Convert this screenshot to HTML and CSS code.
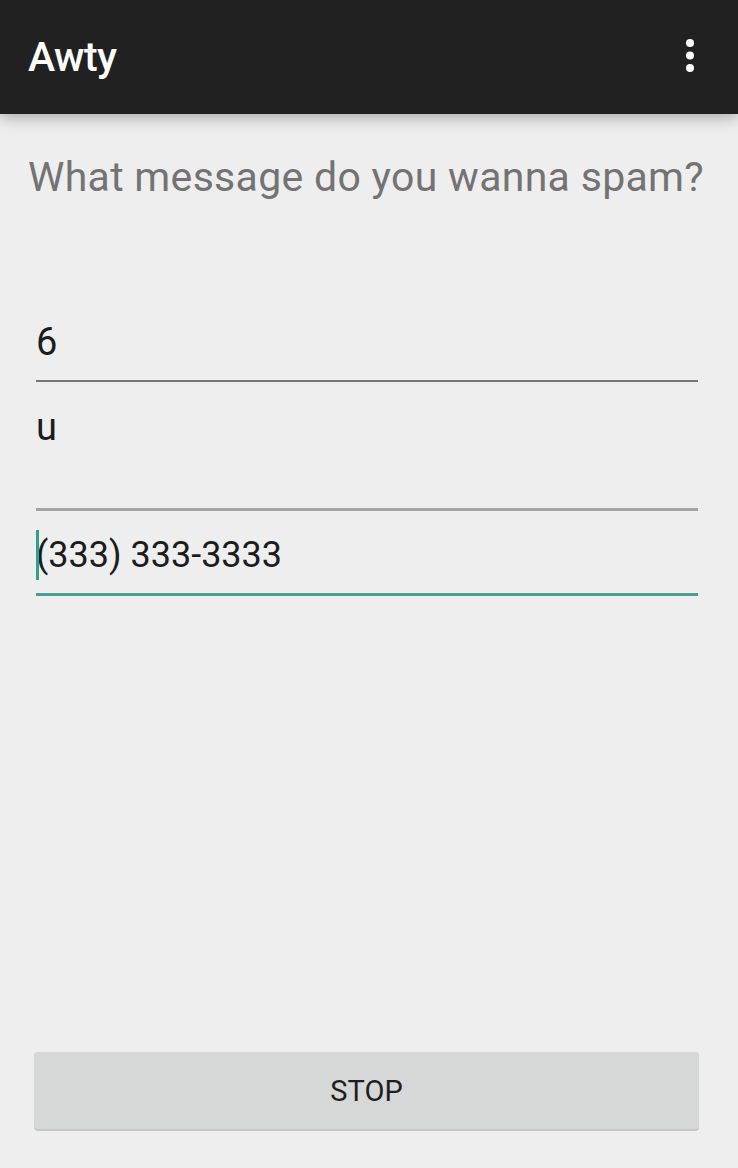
FILE: index.html
```html
<!DOCTYPE html>
<html>
<head>
<meta charset="utf-8">
<link rel="stylesheet" href="styles.css">
</head>
<body>
<div class="screen">
  <header class="appbar">
    <span class="title">Awty</span>
    <svg class="overflow" width="14" height="40" viewBox="0 0 14 40">
      <circle cx="7" cy="6" r="4" fill="#fff"/>
      <circle cx="7" cy="18.5" r="4" fill="#fff"/>
      <circle cx="7" cy="31" r="4" fill="#fff"/>
    </svg>
  </header>
  <main class="content">
    <p class="question">What message do you wanna spam?</p>
    <div class="field field-first">
      <div class="value">6</div>
    </div>
    <div class="field field-multi">
      <div class="value">u</div>
      <div class="value">&nbsp;</div>
    </div>
    <div class="field field-focused">
      <div class="value value-phone"><span class="cursor"></span>(333) 333-3333</div>
    </div>
    <div class="spacer"></div>
    <button class="btn">STOP</button>
  </main>
</div>
</body>
</html>
```

FILE: styles.css
```css
html, body {
  margin: 0;
  padding: 0;
  background: #eeeeee;
  font-family: Roboto, "Noto Sans", sans-serif;
}
.screen {
  width: 738px;
  height: 1168px;
  display: flex;
  flex-direction: column;
  overflow: hidden;
}
.appbar {
  position: relative;
  z-index: 1;
  height: 114px;
  flex: 0 0 114px;
  background: #212121;
  display: flex;
  align-items: center;
  justify-content: space-between;
  padding: 0 41px 0 28px;
  box-sizing: border-box;
  box-shadow: 0 4px 14px rgba(0,0,0,0.28);
}
.title {
  color: #ffffff;
  font-size: 41px;
  font-weight: 500;
  letter-spacing: -0.5px;
}
.overflow {
  display: block;
  margin-top: -1px;
}
.content {
  flex: 1;
  display: flex;
  flex-direction: column;
  padding: 0 36px 39px 36px;
}
.question {
  margin: 39px -30px 0 -8px;
  font-size: 41px;
  line-height: 48px;
  color: #737373;
  letter-spacing: 0.3px;
  white-space: nowrap;
}
.field {
  margin-right: 4px;
}
.value {
  font-size: 38px;
  line-height: 46px;
  color: #1c1c1c;
  position: relative;
}
.value-phone {
  font-size: 36px;
}
.field-first {
  margin-top: 118px;
  padding-bottom: 15px;
  border-bottom: 2px solid #757575;
}
.field-multi {
  padding-top: 22px;
  padding-bottom: 12px;
  border-bottom: 3px solid #a4a4a4;
}
.field-focused {
  padding-top: 21px;
  padding-bottom: 15px;
  border-bottom: 3px solid #4a9f93;
}
.cursor {
  position: absolute;
  left: 0;
  top: -2px;
  width: 3px;
  height: 50px;
  background: #26a491;
}
.spacer {
  flex: 1;
}
.btn {
  margin: 0 3px 0 -2px;
  height: 77px;
  border: none;
  border-radius: 4px;
  background: #d6d7d7;
  box-shadow: 0 2px 0 #c6c6c6, 0 0 1px rgba(0,0,0,0.1);
  font-family: Roboto, "Noto Sans", sans-serif;
  font-size: 29px;
  font-weight: 400;
  color: #1e1e1e;
  padding: 0;
}
```
